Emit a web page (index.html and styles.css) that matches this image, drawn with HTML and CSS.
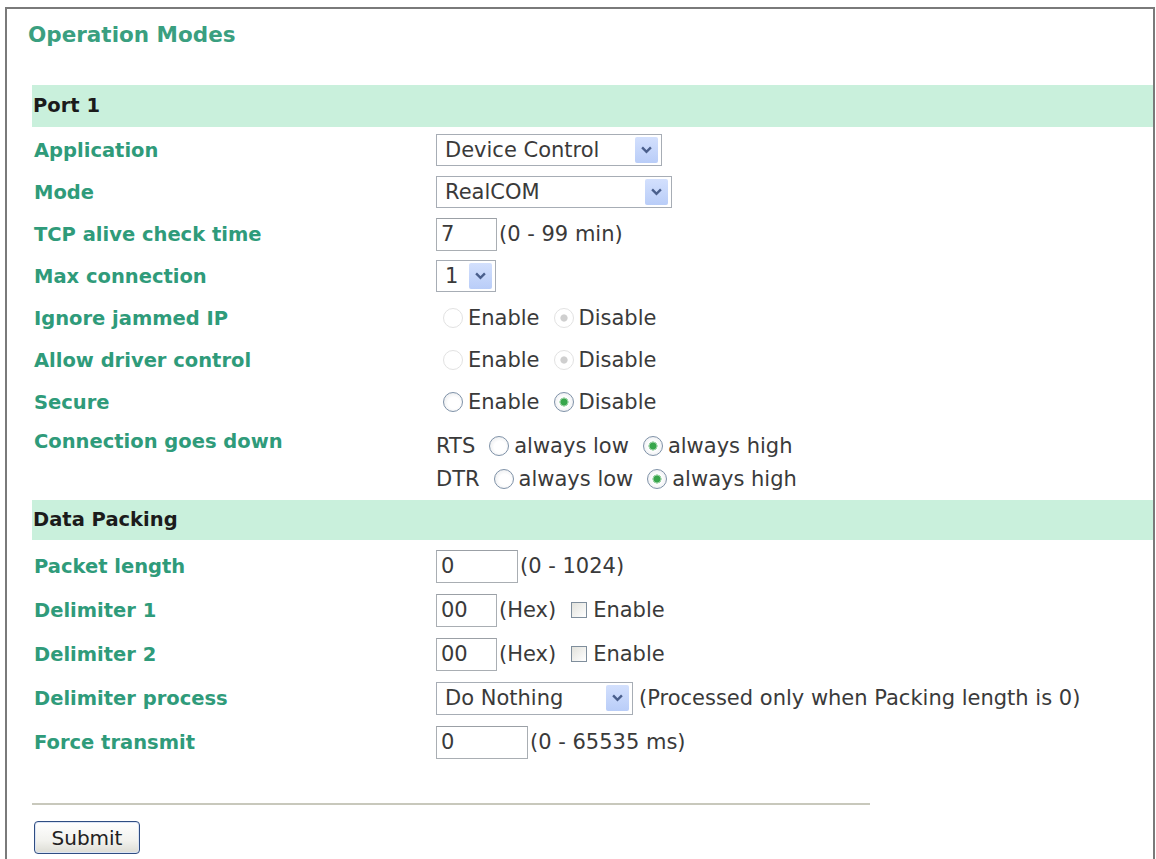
FILE: index.html
```html
<!DOCTYPE html>
<html>
<head>
<meta charset="utf-8">
<title>Operation Modes</title>
<link rel="stylesheet" href="styles.css">
</head>
<body>
<div class="frame">
  <h1 class="title">Operation Modes</h1>
  <div class="content">
    <div class="band">Port 1</div>
    <div class="grid top">
      <div class="label">Application</div>
      <div class="ctrl">
        <span class="select s-app"><span class="val">Device Control</span><span class="arrow"><svg viewBox="0 0 10 7" width="11" height="8"><path d="M1 1.2 L5 5.2 L9 1.2" fill="none" stroke="#4a5f8c" stroke-width="2.2"/></svg></span></span>
      </div>

      <div class="label">Mode</div>
      <div class="ctrl">
        <span class="select s-mode"><span class="val">RealCOM</span><span class="arrow"><svg viewBox="0 0 10 7" width="11" height="8"><path d="M1 1.2 L5 5.2 L9 1.2" fill="none" stroke="#4a5f8c" stroke-width="2.2"/></svg></span></span>
      </div>

      <div class="label">TCP alive check time</div>
      <div class="ctrl"><span class="input i-61">7</span><span class="note">(0 - 99 min)</span></div>

      <div class="label">Max connection</div>
      <div class="ctrl">
        <span class="select s-max"><span class="val">1</span><span class="arrow"><svg viewBox="0 0 10 7" width="11" height="8"><path d="M1 1.2 L5 5.2 L9 1.2" fill="none" stroke="#4a5f8c" stroke-width="2.2"/></svg></span></span>
      </div>

      <div class="label">Ignore jammed IP</div>
      <div class="ctrl"><input type="radio" class="radio" disabled><span class="opt">Enable</span><input type="radio" class="radio" disabled checked><span class="opt">Disable</span></div>

      <div class="label">Allow driver control</div>
      <div class="ctrl"><input type="radio" class="radio" disabled><span class="opt">Enable</span><input type="radio" class="radio" disabled checked><span class="opt">Disable</span></div>

      <div class="label">Secure</div>
      <div class="ctrl"><input type="radio" class="radio" name="sec"><span class="opt">Enable</span><input type="radio" class="radio" name="sec" checked><span class="opt">Disable</span></div>

      <div class="label label-top">Connection goes down</div>
      <div class="ctrl stack">
        <div class="line"><span class="opt">RTS</span><input type="radio" class="radio" name="rts"><span class="opt">always low</span><input type="radio" class="radio" name="rts" checked><span class="opt">always high</span></div>
        <div class="line"><span class="opt">DTR</span><input type="radio" class="radio" name="dtr"><span class="opt">always low</span><input type="radio" class="radio" name="dtr" checked><span class="opt">always high</span></div>
      </div>
    </div>

    <div class="band band-data">Data Packing</div>
    <div class="grid bottom">
      <div class="label">Packet length</div>
      <div class="ctrl"><span class="input i-82">0</span><span class="note">(0 - 1024)</span></div>

      <div class="label">Delimiter 1</div>
      <div class="ctrl"><span class="input i-61">00</span><span class="note opt">(Hex)</span><input type="checkbox" class="check"><span class="opt">Enable</span></div>

      <div class="label">Delimiter 2</div>
      <div class="ctrl"><span class="input i-61">00</span><span class="note opt">(Hex)</span><input type="checkbox" class="check"><span class="opt">Enable</span></div>

      <div class="label">Delimiter process</div>
      <div class="ctrl">
        <span class="select s-proc"><span class="val">Do Nothing</span><span class="arrow"><svg viewBox="0 0 10 7" width="11" height="8"><path d="M1 1.2 L5 5.2 L9 1.2" fill="none" stroke="#4a5f8c" stroke-width="2.2"/></svg></span></span>
        <span class="note gap">(Processed only when Packing length is 0)</span>
      </div>

      <div class="label">Force transmit</div>
      <div class="ctrl"><span class="input i-92">0</span><span class="note">(0 - 65535 ms)</span></div>
    </div>

    <div class="rule"></div>
    <button class="submit" type="button">Submit</button>
  </div>
</div>
</body>
</html>
```

FILE: styles.css
```css
html, body {
  margin: 0;
  padding: 0;
  background: #ffffff;
  overflow: hidden;
}

body {
  font-family: "DejaVu Sans", Verdana, sans-serif;
  color: #333333;
}

.frame {
  box-sizing: border-box;
  margin: 7px 0 0 5px;
  width: 1150px;
  height: 852px;
  border: 2px solid #7a7a7a;
  border-bottom: none;
  overflow: hidden;
}

.title {
  margin: 0;
  padding: 12px 0 0 21px;
  font-size: 21.5px;
  line-height: 28px;
  font-weight: bold;
  color: #3a9f80;
}

.content {
  padding-left: 25px;
  margin-top: 36px;
}

.band {
  height: 42px;
  line-height: 42px;
  background: #c9f0dc;
  padding-left: 1px;
  font-size: 19.5px;
  font-weight: bold;
  color: #1b1b1b;
}

.band-data {
  height: 40px;
  line-height: 40px;
}

.grid {
  display: grid;
  grid-template-columns: 404px 1fr;
}

.grid.top {
  grid-auto-rows: 42px;
  padding-top: 2px;
  height: 371px;
  align-content: start;
}

.grid.top .stack {
  grid-row: span 2;
}

.grid.bottom {
  grid-auto-rows: 44px;
  padding-top: 4px;
}

.label {
  display: flex;
  align-items: center;
  padding-left: 2px;
  font-size: 19.5px;
  font-weight: bold;
  color: #2f9b7a;
  white-space: nowrap;
}

.label-top {
  align-items: flex-start;
  padding-top: 7px;
}

.ctrl {
  display: flex;
  align-items: center;
  font-size: 21px;
  color: #3a3a3a;
  white-space: nowrap;
}

.opt {
  margin-right: 7px;
}

.stack {
  flex-direction: column;
  align-items: flex-start;
  justify-content: flex-start;
  padding-top: 6px;
}

.stack .line {
  display: flex;
  align-items: center;
  height: 33px;
}

.select {
  box-sizing: border-box;
  display: flex;
  align-items: center;
  height: 32px;
  border: 1px solid #a7adb5;
  background: #ffffff;
  padding-left: 8px;
}

.select .val {
  flex: 1;
  white-space: nowrap;
}

.select .arrow {
  box-sizing: border-box;
  display: flex;
  align-items: center;
  justify-content: center;
  width: 23px;
  height: 26px;
  margin-right: 3px;
  background: linear-gradient(#d3e0fd, #b9cdf8);
  border-radius: 2px;
}

.s-app { width: 226px; }
.s-mode { width: 236px; }
.s-max { width: 60px; }
.s-proc { width: 197px; height: 33px; }

.input {
  box-sizing: border-box;
  display: inline-flex;
  align-items: center;
  height: 33px;
  border: 1px solid #a9aeb3;
  border-top-color: #9ba0a6;
  padding-left: 4px;
  background: #fff;
  margin-right: 2px;
}

.i-61 { width: 61px; }
.i-82 { width: 82px; }
.i-92 { width: 92px; }

.note.gap {
  margin-left: 6px;
}

.radio {
  -webkit-appearance: none;
  appearance: none;
  box-sizing: border-box;
  width: 20px;
  height: 20px;
  margin: 0 5px 0 7px;
  border-radius: 50%;
  border: 1.5px solid #7f92a8;
  background: radial-gradient(circle at 55% 55%, #ffffff 40%, #e1e3e6 100%);
}

.radio:checked {
  background: radial-gradient(circle, #37a64b 0 3.4px, #9fd3a8 3.6px 4.4px, #ffffff 4.8px, #e4e6ea 100%);
}

.radio:disabled {
  border: 1.5px solid #e2e2e2;
  background: #ffffff;
}

.radio:disabled:checked {
  background: radial-gradient(circle, #cfcfcf 0 3.2px, #ffffff 4px);
}

.check {
  -webkit-appearance: none;
  appearance: none;
  box-sizing: border-box;
  width: 16px;
  height: 16px;
  margin: 0 6px 0 8px;
  border: 1.5px solid #7f8e9c;
  background: linear-gradient(135deg, #e2e2dc, #ffffff);
}

.rule {
  height: 2px;
  width: 838px;
  background: #c8c8bc;
  margin-top: 39px;
}

.submit {
  display: block;
  margin: 16px 0 0 2px;
  box-sizing: border-box;
  width: 106px;
  height: 33px;
  border: 1.5px solid #2f4d82;
  border-radius: 4px;
  background: linear-gradient(#ffffff, #f2f2ee 60%, #dcdcd4);
  box-shadow: inset 0 0 0 1px #dbe4f4;
  font-family: "DejaVu Sans", Verdana, sans-serif;
  font-size: 20px;
  color: #222;
  padding: 0;
}
```
